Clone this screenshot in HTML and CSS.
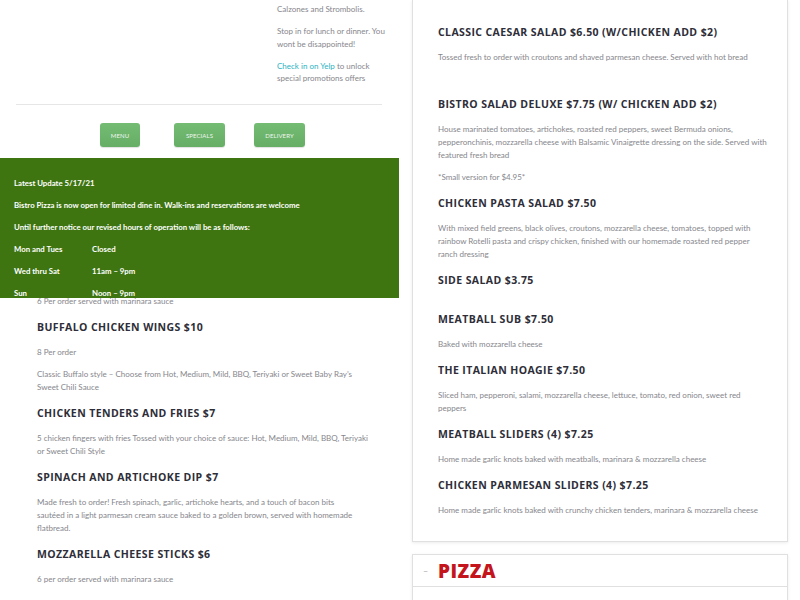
FILE: index.html
```html
<!DOCTYPE html>
<html>
<head>
<meta charset="utf-8">
<link rel="stylesheet" href="styles.css">
</head>
<body>
<div class="page">
  <div class="left">
    <div class="intro">
      <div class="intro-text">
        <p>Calzones and Strombolis.</p>
        <p>Stop in for lunch or dinner. You wont be disappointed!</p>
        <p><a class="yelp" href="#">Check in on Yelp</a> to unlock special promotions offers</p>
      </div>
    </div>
    <hr class="rule">
    <div class="buttons">
      <a class="btn btn-menu" href="#">MENU</a>
      <a class="btn btn-specials" href="#">SPECIALS</a>
      <a class="btn btn-delivery" href="#">DELIVERY</a>
    </div>
    <div class="menu-list left-list">
      <h3>APPETIZERS</h3>
      <p>Hand tossed garlic knots brushed with garlic butter and parmesan</p>
      <h3>GARLIC KNOTS $4</h3>
      <p>6 Per order served with marinara sauce</p>
      <h3>BUFFALO CHICKEN WINGS $10</h3>
      <p>8 Per order</p>
      <p>Classic Buffalo style – Choose from Hot, Medium, Mild, BBQ, Teriyaki or Sweet Baby Ray’s Sweet Chili Sauce</p>
      <h3>CHICKEN TENDERS AND FRIES $7</h3>
      <p>5 chicken fingers with fries Tossed with your choice of sauce: Hot, Medium, Mild, BBQ, Teriyaki or Sweet Chili Style</p>
      <h3>SPINACH AND ARTICHOKE DIP $7</h3>
      <p>Made fresh to order! Fresh spinach, garlic, artichoke hearts, and a touch of bacon bits<br>sautéed in a light parmesan cream sauce baked to a golden brown, served with homemade flatbread.</p>
      <h3>MOZZARELLA CHEESE STICKS $6</h3>
      <p>6 per order served with marinara sauce</p>
      <h3>GARLIC CHEESE BREAD $4</h3>
      <p>Served with marinara sauce</p>
    </div>
  </div>

  <div class="right">
    <div class="card first">
      <div class="menu-list">
        <h3>CLASSIC CAESAR SALAD $6.50 (W/CHICKEN ADD $2)</h3>
        <p class="extra">Tossed fresh to order with croutons and shaved parmesan cheese. Served with hot bread</p>
        <h3>BISTRO SALAD DELUXE $7.75 (W/ CHICKEN ADD $2)</h3>
        <p>House marinated tomatoes, artichokes, roasted red peppers, sweet Bermuda onions, pepperonchinis, mozzarella cheese with Balsamic Vinaigrette dressing on the side. Served with featured fresh bread</p>
        <p>*Small version for $4.95*</p>
        <h3>CHICKEN PASTA SALAD $7.50</h3>
        <p>With mixed field greens, black olives, croutons, mozzarella cheese, tomatoes, topped with rainbow Rotelli pasta and crispy chicken, finished with our homemade roasted red pepper ranch dressing</p>
        <h3 class="solo">SIDE SALAD $3.75</h3>
        <h3>MEATBALL SUB $7.50</h3>
        <p>Baked with mozzarella cheese</p>
        <h3>THE ITALIAN HOAGIE $7.50</h3>
        <p>Sliced ham, pepperoni, salami, mozzarella cheese, lettuce, tomato, red onion, sweet red peppers</p>
        <h3>MEATBALL SLIDERS (4) $7.25</h3>
        <p>Home made garlic knots baked with meatballs, marinara &amp; mozzarella cheese</p>
        <h3>CHICKEN PARMESAN SLIDERS (4) $7.25</h3>
        <p>Home made garlic knots baked with crunchy chicken tenders, marinara &amp; mozzarella cheese</p>
      </div>
    </div>
    <div class="card pizza">
      <div class="pizza-head">
        <span class="toggle">–</span>
        <span class="pizza-title">PIZZA</span>
      </div>
      <div class="pizza-body"></div>
    </div>
  </div>
</div>

<div class="notice">
  <p>Latest Update 5/17/21</p>
  <p>Bistro Pizza is now open for limited dine in. Walk-ins and reservations are welcome</p>
  <p>Until further notice our revised hours of operation will be as follows:</p>
  <p><span class="day">Mon and Tues</span>Closed</p>
  <p><span class="day">Wed thru Sat</span>11am – 9pm</p>
  <p><span class="day">Sun</span>Noon – 9pm</p>
</div>
</body>
</html>
```

FILE: styles.css
```css
html, body {
  margin: 0;
  padding: 0;
  background: #fff;
  overflow: hidden;
}
body {
  font-family: Lato, "Open Sans", sans-serif;
  color: #86868c;
  width: 800px;
  height: 600px;
}
.page {
  display: grid;
  grid-template-columns: 400px 400px;
  align-items: start;
}

/* left column */
.left {
  padding: 0 18px 0 16px;
}
.intro {
  display: flex;
  justify-content: flex-end;
  padding-top: 3px;
}
.intro-text {
  width: 112px;
  margin-right: -7px;
  font-size: 8px;
  line-height: 12.5px;
}
.intro-text p {
  margin: 0 0 9.5px;
}
.yelp {
  color: #2cb3c2;
  text-decoration: none;
}
.rule {
  border: 0;
  border-top: 1px solid #e6e6e6;
  margin: 10px 0 0;
  width: 366px;
}
.buttons {
  display: flex;
  padding: 18px 0 0 84px;
  height: 24px;
}
.btn {
  display: flex;
  align-items: center;
  justify-content: center;
  height: 24px;
  border-radius: 3px;
  background: linear-gradient(#74bb74, #66ad66);
  box-shadow: 0 1px 1px rgba(0,0,0,0.12);
  color: #eef7ee;
  font-size: 6px;
  text-decoration: none;
  letter-spacing: 0.1px;
}
.btn-menu { width: 40px; }
.btn-specials { width: 51px; margin-left: 34px; }
.btn-delivery { width: 51px; margin-left: 29px; }

.menu-list {
  display: flex;
  flex-direction: column;
}
.menu-list h3 {
  margin: 2.5px 0 10.5px;
  font-family: "Open Sans", sans-serif;
  font-weight: 700;
  font-size: 10.5px;
  line-height: 16px;
  letter-spacing: 0.4px;
  color: #2e2e38;
}
.menu-list p {
  margin: 0 0 9px;
  font-size: 8px;
  line-height: 13px;
}
.left-list {
  padding: 0 0 0 21px;
  margin-top: 67.5px;
  width: 334px;
}

/* right column */
.right {
  padding: 0 12px 0 12px;
}
.card {
  border: 1px solid #e0e0e0;
  box-shadow: 0 1px 3px rgba(0,0,0,0.08);
  background: #fff;
}
.card.first {
  border-top: 0;
  padding: 21.5px 20px 15px 25px;
}
.menu-list p.extra {
  margin-bottom: 30px;
}
.menu-list h3.solo {
  margin-bottom: 20.5px;
}
.pizza {
  margin-top: 12.5px;
}
.pizza-head {
  display: flex;
  align-items: center;
  height: 31px;
  border-bottom: 1px solid #e0e0e0;
}
.toggle {
  width: 15px;
  margin-left: 10px;
  color: #b0b0b0;
  font-size: 9px;
}
.pizza-title {
  font-family: "Open Sans", sans-serif;
  font-weight: 800;
  font-size: 19px;
  color: #c4151c;
  letter-spacing: 0.5px;
}
.pizza-body {
  height: 40px;
}

/* fixed notice banner */
.notice {
  position: fixed;
  top: 158px;
  left: 0;
  width: 385px;
  height: 126px;
  padding: 14px 0 0 14px;
  background: #3e7511;
  color: #fff;
  overflow: hidden;
  font-size: 7.8px;
  font-weight: 700;
  line-height: 22px;
}
.notice p {
  margin: 0;
}
.day {
  display: inline-block;
  width: 78px;
}
```
